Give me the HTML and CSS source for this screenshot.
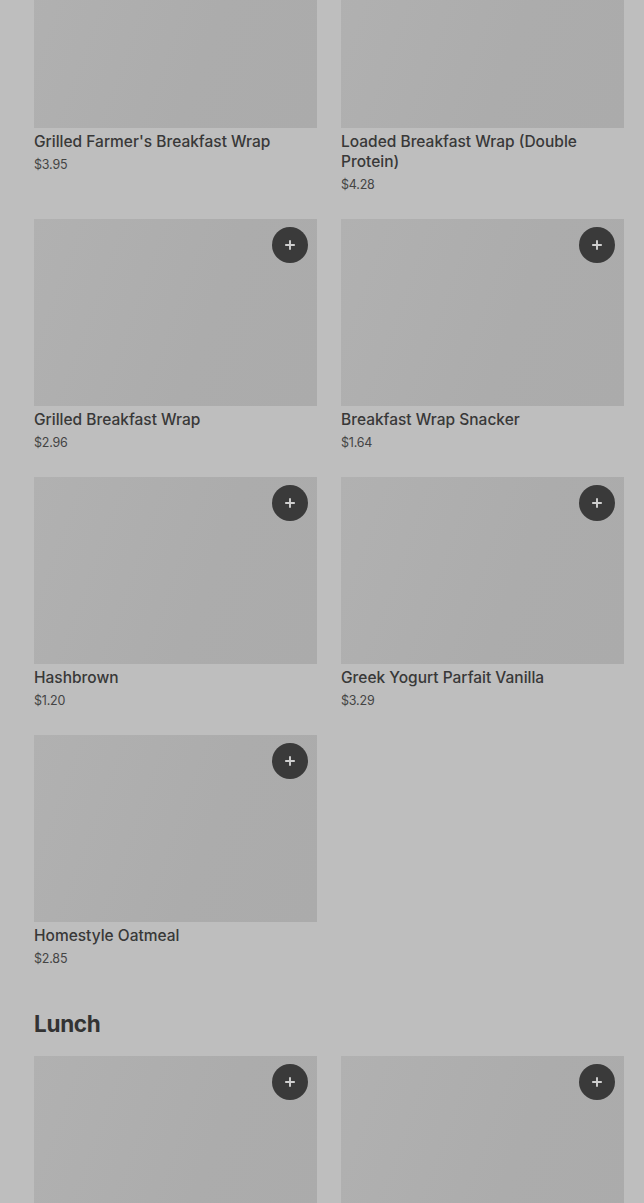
FILE: index.html
```html
<!DOCTYPE html>
<html lang="en">
<head>
    <meta charset="UTF-8">
    <meta name="viewport" content="width=device-width, initial-scale=1.0">
    <title>Menu</title>
    <link rel="stylesheet" href="styles.css">
</head>
<body>
    <main class="menu">
        <section class="section section-first">
            <div class="grid">
                <div class="item">
                    <div class="thumb"></div>
                    <h3>Grilled Farmer's Breakfast Wrap</h3>
                    <p class="price">$3.95</p>
                </div>
                <div class="item">
                    <div class="thumb"></div>
                    <h3>Loaded Breakfast Wrap (Double Protein)</h3>
                    <p class="price">$4.28</p>
                </div>
                <div class="item">
                    <div class="thumb"><button class="add"><svg viewBox="0 0 16 16" width="14" height="14"><path d="M8 2.5v11M2.5 8h11" stroke="currentColor" stroke-width="2.2"/></svg></button></div>
                    <h3>Grilled Breakfast Wrap</h3>
                    <p class="price">$2.96</p>
                </div>
                <div class="item">
                    <div class="thumb"><button class="add"><svg viewBox="0 0 16 16" width="14" height="14"><path d="M8 2.5v11M2.5 8h11" stroke="currentColor" stroke-width="2.2"/></svg></button></div>
                    <h3>Breakfast Wrap Snacker</h3>
                    <p class="price">$1.64</p>
                </div>
                <div class="item">
                    <div class="thumb"><button class="add"><svg viewBox="0 0 16 16" width="14" height="14"><path d="M8 2.5v11M2.5 8h11" stroke="currentColor" stroke-width="2.2"/></svg></button></div>
                    <h3>Hashbrown</h3>
                    <p class="price">$1.20</p>
                </div>
                <div class="item">
                    <div class="thumb"><button class="add"><svg viewBox="0 0 16 16" width="14" height="14"><path d="M8 2.5v11M2.5 8h11" stroke="currentColor" stroke-width="2.2"/></svg></button></div>
                    <h3>Greek Yogurt Parfait Vanilla</h3>
                    <p class="price">$3.29</p>
                </div>
                <div class="item">
                    <div class="thumb"><button class="add"><svg viewBox="0 0 16 16" width="14" height="14"><path d="M8 2.5v11M2.5 8h11" stroke="currentColor" stroke-width="2.2"/></svg></button></div>
                    <h3>Homestyle Oatmeal</h3>
                    <p class="price">$2.85</p>
                </div>
            </div>
        </section>

        <section class="section">
            <h2>Lunch</h2>
            <div class="grid">
                <div class="item">
                    <div class="thumb"><button class="add"><svg viewBox="0 0 16 16" width="14" height="14"><path d="M8 2.5v11M2.5 8h11" stroke="currentColor" stroke-width="2.2"/></svg></button></div>
                </div>
                <div class="item">
                    <div class="thumb"><button class="add"><svg viewBox="0 0 16 16" width="14" height="14"><path d="M8 2.5v11M2.5 8h11" stroke="currentColor" stroke-width="2.2"/></svg></button></div>
                </div>
            </div>
        </section>
    </main>
</body>
</html>
```

FILE: styles.css
```css
* {
    margin: 0;
    padding: 0;
    box-sizing: border-box;
}
body {
    background: #bebebe;
    font-family: Inter, "Noto Sans", Arial, sans-serif;
    color: #363636;
    overflow: hidden;
    height: 1203px;
}
.menu {
    padding: 0 20px 0 34px;
}
.section-first {
    margin-top: -59px;
}
.section h2 {
    font-size: 22.5px;
    line-height: 36px;
    font-weight: 700;
    color: #333;
    margin: 37px 0 14px;
    letter-spacing: -0.3px;
}
.grid {
    display: grid;
    grid-template-columns: 1fr 1fr;
    column-gap: 24px;
    row-gap: 24px;
}
.item h3 {
    font-size: 15.5px;
    line-height: 20px;
    font-weight: 500;
    margin-top: 4px;
    color: #383838;
}
.price {
    font-size: 12.5px;
    line-height: 20px;
    margin-top: 3px;
    color: #444;
    letter-spacing: -0.2px;
}
.thumb {
    position: relative;
    height: 187px;
    background: linear-gradient(110deg, #b1b1b1 0%, #acacac 60%, #ababab 100%);
}
.add {
    position: absolute;
    top: 8px;
    right: 9px;
    width: 36px;
    height: 36px;
    border-radius: 50%;
    border: none;
    background: #3a3a3a;
    color: #cfcfcf;
    display: flex;
    align-items: center;
    justify-content: center;
}
```
